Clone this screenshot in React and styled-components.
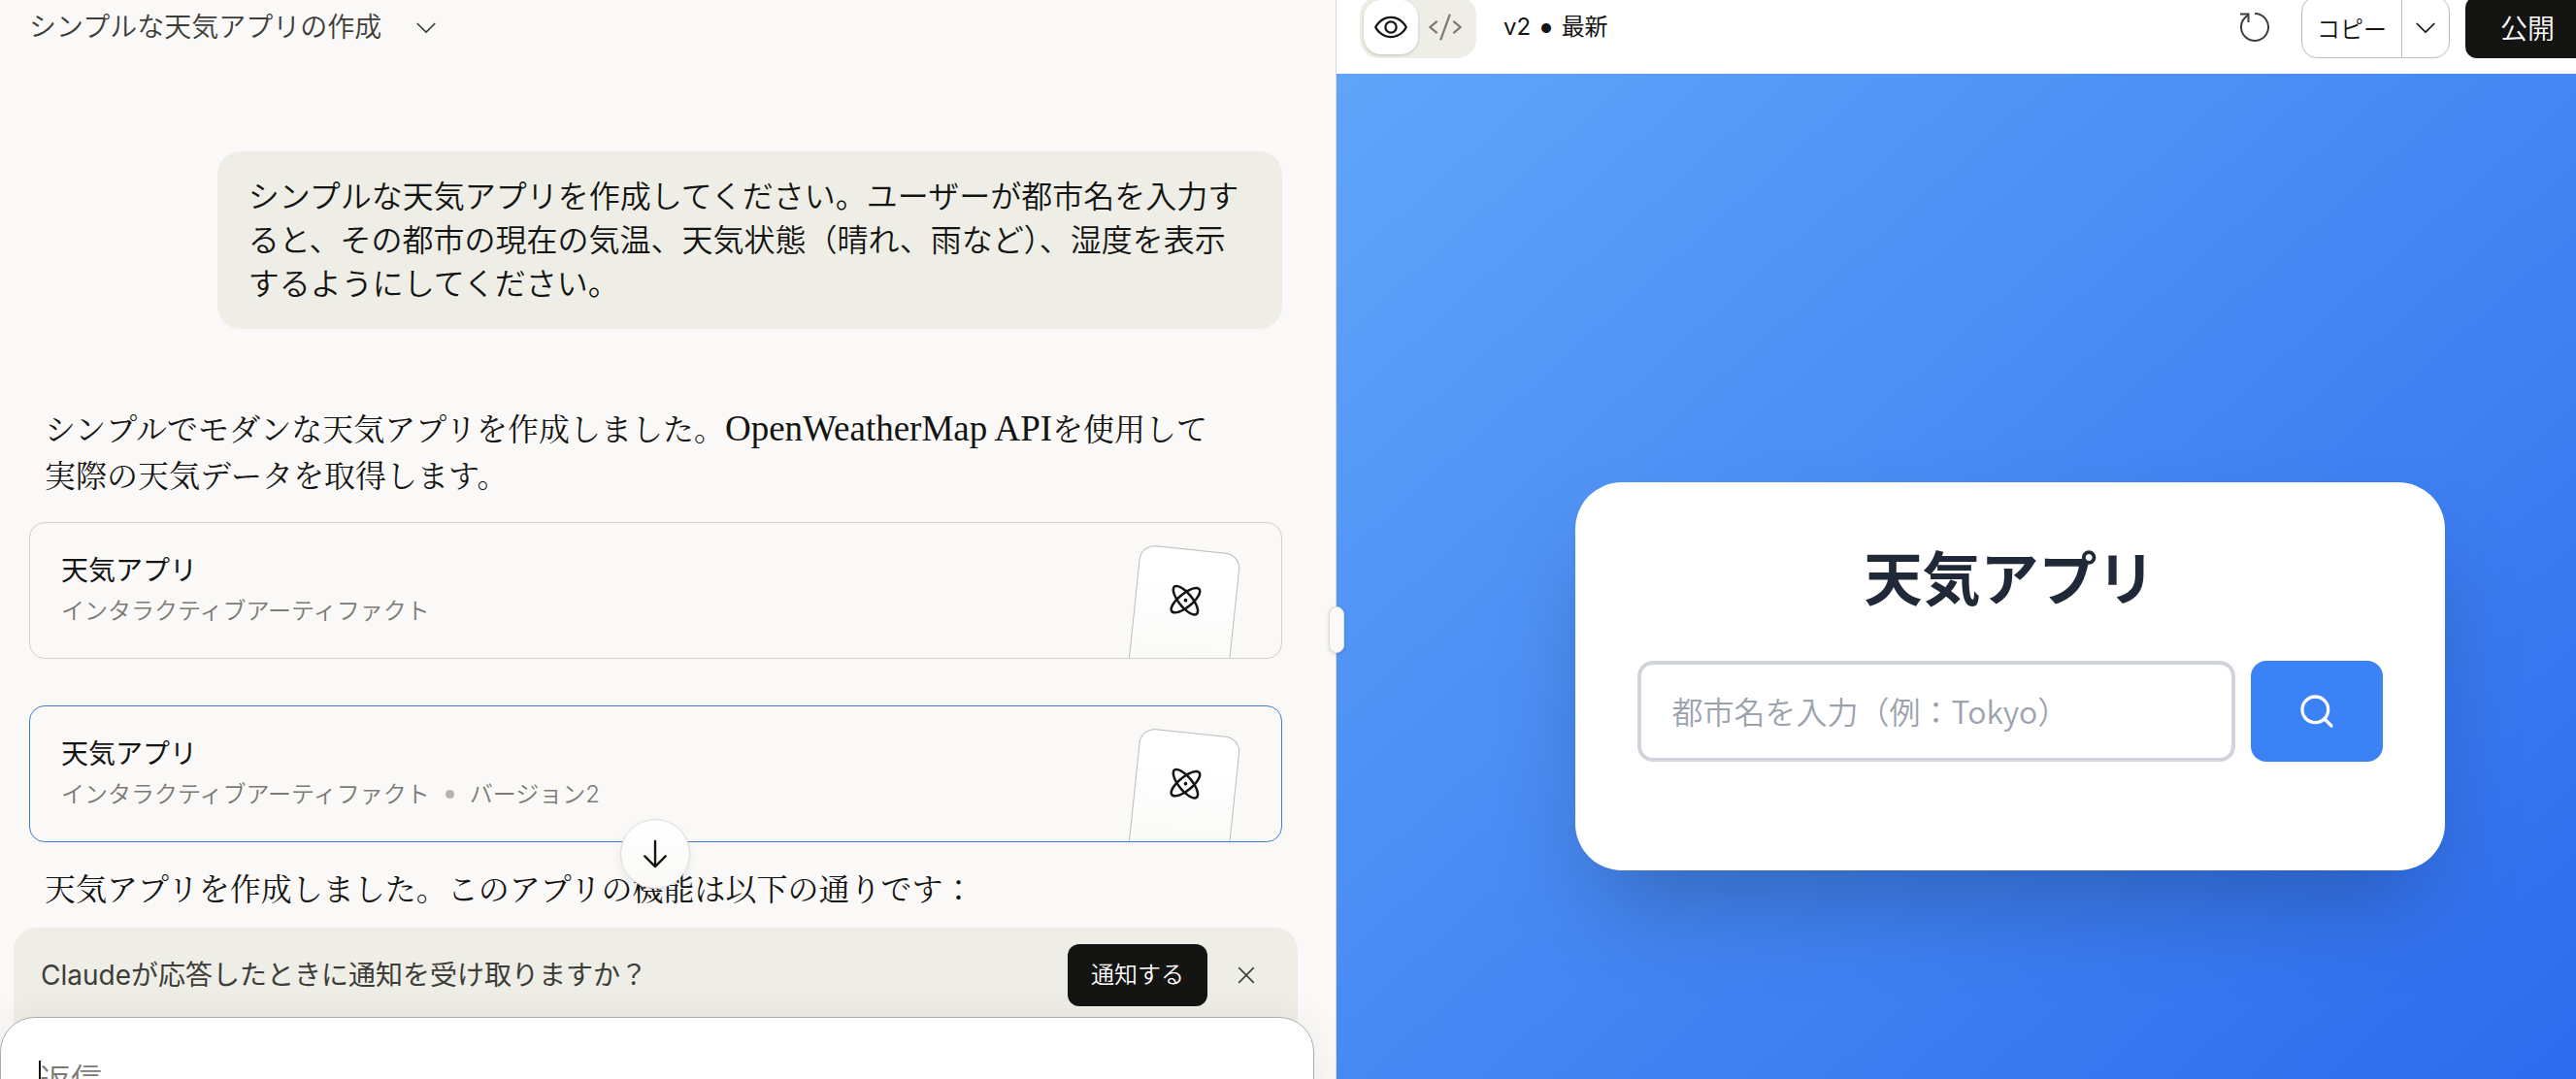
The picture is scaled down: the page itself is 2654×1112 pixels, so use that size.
import styled, { createGlobalStyle, css } from 'styled-components';
import { PiArrowDown, PiAtom, PiCaretDown, PiCode, PiEye, PiX } from 'react-icons/pi';
import { Search } from 'lucide-react';

const artifacts = [
  { id: 1, title: '天気アプリ', type: 'インタラクティブアーティファクト' },
  { id: 2, title: '天気アプリ', type: 'インタラクティブアーティファクト', version: 'バージョン2', active: true },
];

function ReloadIcon() {
  return (
    <svg width="32" height="32" viewBox="0 0 32 32" fill="none" stroke="currentColor" strokeWidth="2">
      <path d="M16 2A14 14 0 1 1 6 6.2L9.5 3" />
      <path d="M1 2.5H9.5V11" />
    </svg>
  );
}

function ArtifactCard({ title, type, version, active }) {
  return (
    <Artifact type="button" $active={active}>
      <ArtifactText>
        <ArtifactTitle>{title}</ArtifactTitle>
        <ArtifactMeta>
          <span>{type}</span>
          {version && <Dot />}
          {version && <span>{version}</span>}
        </ArtifactMeta>
      </ArtifactText>
      <Paper>
        <PiAtom size={40} />
      </Paper>
    </Artifact>
  );
}

function Chat() {
  return (
    <ChatPane>
      <ChatHeader>
        <TitleButton type="button">
          シンプルな天気アプリの作成
          <PiCaretDown size={28} />
        </TitleButton>
      </ChatHeader>

      <Thread>
        <UserMessage>
          シンプルな天気アプリを作成してください。ユーザーが都市名を入力すると、その都市の現在の気温、天気状態（晴れ、雨など）、湿度を表示するようにしてください。
        </UserMessage>
        <Reply>
          シンプルでモダンな天気アプリを作成しました。<Latin>OpenWeatherMap API</Latin>を使用して実際の天気データを取得します。
        </Reply>
        <ArtifactList>
          {artifacts.map((artifact) => (
            <ArtifactCard key={artifact.id} {...artifact} />
          ))}
        </ArtifactList>
        <Reply>天気アプリを作成しました。このアプリの機能は以下の通りです：</Reply>
      </Thread>

      <Dock>
        <ScrollButton type="button" aria-label="下へスクロール">
          <PiArrowDown size={38} />
        </ScrollButton>
        <Notice>
          <p>Claudeが応答したときに通知を受け取りますか？</p>
          <NotifyButton type="button">通知する</NotifyButton>
          <CloseButton type="button" aria-label="閉じる">
            <PiX size={26} />
          </CloseButton>
        </Notice>
        <Composer>
          <Caret />
          <ReplyInput aria-label="返信" placeholder="返信" rows={1} />
        </Composer>
      </Dock>
    </ChatPane>
  );
}

function Preview() {
  return (
    <PreviewPane>
      <Handle />
      <Toolbar>
        <Toggle>
          <ToggleButton type="button" aria-label="プレビュー" $active>
            <PiEye size={36} />
          </ToggleButton>
          <ToggleButton type="button" aria-label="コード">
            <PiCode size={36} />
          </ToggleButton>
        </Toggle>
        <Version>
          v2 <Bullet>•</Bullet> 最新
        </Version>
        <ReloadButton type="button" aria-label="再読み込み">
          <ReloadIcon />
        </ReloadButton>
        <CopyGroup>
          <CopyButton type="button">コピー</CopyButton>
          <CopyMenu type="button" aria-label="その他">
            <PiCaretDown size={28} />
          </CopyMenu>
        </CopyGroup>
        <PublishButton type="button">公開</PublishButton>
      </Toolbar>

      <Viewport>
        <Stage>
          <WeatherCard>
            <h1>天気アプリ</h1>
            <SearchRow>
              <CityInput type="text" aria-label="都市名" placeholder="都市名を入力（例：Tokyo）" />
              <SearchButton type="button" aria-label="検索">
                <Search size={40} />
              </SearchButton>
            </SearchRow>
          </WeatherCard>
        </Stage>
      </Viewport>
    </PreviewPane>
  );
}

function App() {
  return (
    <Shell>
      <GlobalStyle />
      <Chat />
      <Preview />
    </Shell>
  );
}

export default App;

const GlobalStyle = createGlobalStyle`
  * {
    box-sizing: border-box;
    margin: 0;
    padding: 0;
  }
  body {
    background: #faf9f7;
    color: #141413;
    font-family: Inter, 'Noto Sans CJK JP', sans-serif;
    font-weight: 350;
    overflow: hidden;
  }
  button, input, textarea {
    font: inherit;
    color: inherit;
    border: none;
    background: none;
    outline: none;
  }
  svg {
    display: block;
    flex: none;
  }
`;

const Shell = styled.div`
  display: grid;
  grid-template-columns: minmax(0, 1376fr) minmax(0, 1278fr);
  height: 100vh;
  overflow: hidden;
`;

const ChatPane = styled.section`
  display: flex;
  flex-direction: column;
  height: 100vh;
  overflow: hidden;
`;

const ChatHeader = styled.header`
  flex: none;
  height: 56px;
  padding: 0 30px;
  display: flex;
  align-items: center;
`;

const TitleButton = styled.button`
  display: flex;
  align-items: center;
  gap: 32px;
  font-size: 28px;
  line-height: 40px;
  color: #3d3d3a;
`;

const Thread = styled.div`
  flex: 1;
  min-height: 0;
  padding: 100px 55px 0 30px;
`;

const UserMessage = styled.p`
  width: 85%;
  margin-left: auto;
  padding: 24px 32px;
  border-radius: 24px;
  background: #efeee6;
  font-size: 32px;
  line-height: 45px;
  margin-bottom: 77px;
`;

const Reply = styled.p`
  padding: 0 48px 0 16px;
  font-family: 'Noto Serif CJK JP', 'Noto Sans CJK JP', serif;
  font-size: 32px;
  font-weight: 400;
  line-height: 48px;
`;

const Latin = styled.span`
  font-family: 'Liberation Serif', serif;
  font-size: 37px;
  line-height: 40px;
`;

const ArtifactList = styled.div`
  display: flex;
  flex-direction: column;
  gap: 48px;
  margin: 26px 0 22px;
`;

const Artifact = styled.button`
  display: flex;
  align-items: center;
  justify-content: space-between;
  height: 141px;
  padding: 0 41px 0 32px;
  border: 1px solid ${(props) => (props.$active ? '#3f7fd3' : '#d1d0cc')};
  border-radius: 16px;
  overflow: hidden;
  text-align: left;
`;

const ArtifactText = styled.div`
  display: flex;
  flex-direction: column;
  gap: 2px;
  line-height: 40px;
`;

const ArtifactTitle = styled.div`
  font-size: 28px;
  font-weight: 400;
`;

const ArtifactMeta = styled.div`
  display: flex;
  align-items: center;
  gap: 16px;
  font-size: 24px;
  color: #7b7a75;
`;

const Dot = styled.i`
  width: 9px;
  height: 9px;
  border-radius: 50%;
  background: #b5b4ae;
`;

const Paper = styled.div`
  align-self: flex-start;
  display: flex;
  justify-content: center;
  width: 104px;
  height: 160px;
  margin-top: 27px;
  padding-top: 32px;
  border: 1px solid #bdbcb8;
  border-radius: 16px;
  background: linear-gradient(#ffffff 20%, #faf9f7 80%);
  transform: rotate(6deg);
  transform-origin: top center;
`;

const Dock = styled.div`
  position: relative;
  flex: none;
  margin: 0 22px -64px 0;
`;

const ScrollButton = styled.button`
  position: absolute;
  z-index: 2;
  top: -112px;
  left: 50%;
  display: flex;
  align-items: center;
  justify-content: center;
  width: 72px;
  height: 72px;
  margin-left: -38px;
  border: 1px solid #dddcd8;
  border-radius: 50%;
  background: linear-gradient(#ffffff, #faf9f7);
  box-shadow: 0 4px 8px rgba(0, 0, 0, 0.08);
`;

const Notice = styled.div`
  display: flex;
  align-items: center;
  height: 132px;
  margin: 0 17px 0 14px;
  padding: 0 40px 34px 28px;
  border-radius: 24px 24px 0 0;
  background: #efeee6;
  font-size: 28px;
  font-weight: 400;
  line-height: 40px;
  color: #3d3d3a;
  p {
    flex: 1;
  }
`;

const NotifyButton = styled.button`
  height: 64px;
  padding: 0 24px;
  border-radius: 12px;
  background: #141413;
  color: #ffffff;
  font-size: 24px;
  font-weight: 350;
`;

const CloseButton = styled.button`
  margin-left: 27px;
`;

const Composer = styled.div`
  position: relative;
  height: 128px;
  margin-top: -40px;
  padding: 40px 40px 0;
  border: 1px solid #adaca8;
  border-radius: 36px;
  background: #ffffff;
  box-shadow: 0 0 40px rgba(0, 0, 0, 0.06);
`;

const ReplyInput = styled.textarea`
  display: block;
  width: 100%;
  height: 48px;
  resize: none;
  font-size: 32px;
  line-height: 48px;
  &::placeholder {
    color: #7b7a75;
  }
`;

const Caret = styled.i`
  position: absolute;
  top: 44px;
  left: 39px;
  width: 2px;
  height: 40px;
  background: #141413;
`;

const PreviewPane = styled.section`
  position: relative;
  display: flex;
  flex-direction: column;
  height: 100vh;
  border-left: 1px solid #d6d5d1;
  background: #ffffff;
`;

const Handle = styled.div`
  position: absolute;
  z-index: 2;
  top: 625px;
  left: -8px;
  width: 16px;
  height: 48px;
  border: 1px solid #dddcd8;
  border-radius: 8px;
  background: #faf9f7;
  box-shadow: 0 1px 4px rgba(0, 0, 0, 0.15);
`;

/* the controls are taller than the content box and run past its top edge */
const Toolbar = styled.header`
  flex: none;
  display: flex;
  align-items: center;
  height: 76px;
  padding: 0 0 20px 24px;
  margin-right: -14px;
`;

const Toggle = styled.div`
  display: flex;
  align-items: center;
  height: 64px;
  padding: 4px;
  border-radius: 20px;
  background: #efeee6;
`;

const ToggleButton = styled.button`
  display: flex;
  align-items: center;
  justify-content: center;
  width: 56px;
  height: 56px;
  border-radius: 18px;
  color: #7b7a75;
  ${(props) =>
    props.$active &&
    css`
      background: #ffffff;
      color: #141413;
      box-shadow: 0 1px 3px rgba(0, 0, 0, 0.2);
    `}
`;

const Version = styled.p`
  flex: 1;
  margin-left: 28px;
  font-size: 24px;
  font-weight: 400;
  line-height: 40px;
`;

const Bullet = styled.span`
  font-size: 32px;
  line-height: 24px;
  vertical-align: -2px;
`;

const ReloadButton = styled.button`
  margin-right: 32px;
  color: #3d3d3a;
`;

const CopyGroup = styled.div`
  display: flex;
  height: 64px;
  margin-right: 16px;
  border: 1px solid #bdbcb8;
  border-radius: 16px;
`;

const CopyButton = styled.button`
  width: 102px;
  font-size: 24px;
`;

const CopyMenu = styled.button`
  display: flex;
  align-items: center;
  justify-content: center;
  width: 49px;
  border-left: 1px solid #bdbcb8;
`;

const PublishButton = styled.button`
  height: 64px;
  padding: 0 36px;
  border-radius: 12px;
  background: #141413;
  color: #ffffff;
  font-size: 28px;
`;

const Viewport = styled.div`
  flex: 1;
  min-height: 0;
  overflow: hidden;
`;

/* the previewed page is larger than the space it is shown in */
const Stage = styled.div`
  display: flex;
  align-items: center;
  justify-content: center;
  width: calc(100% + 110px);
  height: calc(100% + 206px);
  background: linear-gradient(to bottom right, #60a5fa, #2563eb);
`;

const WeatherCard = styled.main`
  width: 896px;
  padding: 64px 64px 112px;
  border-radius: 48px;
  background: #ffffff;
  box-shadow: 0 50px 100px -24px rgba(0, 0, 0, 0.25);
  h1 {
    margin-bottom: 48px;
    font-size: 60px;
    line-height: 72px;
    font-weight: 700;
    text-align: center;
    color: #1f2937;
  }
`;

const SearchRow = styled.div`
  display: flex;
  gap: 16px;
`;

const CityInput = styled.input`
  flex: 1;
  min-width: 0;
  height: 104px;
  padding: 0 32px 2px;
  border: 4px solid #d1d5db;
  border-radius: 16px;
  font-family: 'Noto Sans CJK JP', sans-serif;
  font-size: 32px;
  &::placeholder {
    color: #9ca3af;
  }
`;

const SearchButton = styled.button`
  padding: 0 48px;
  border-radius: 16px;
  background: #3b82f6;
  color: #ffffff;
`;
